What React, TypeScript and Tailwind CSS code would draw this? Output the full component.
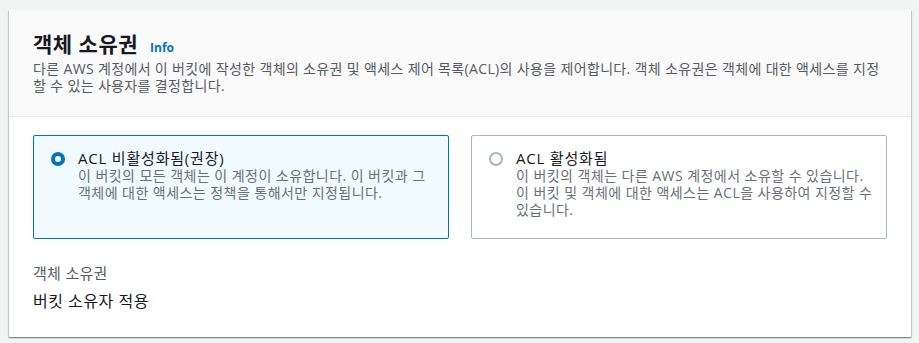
import React from "react"

const font = { fontFamily: '"Open Sans", "Noto Sans CJK KR", sans-serif' }

type Option = {
  id: string
  title: string
  desc: string
  selected: boolean
}

const options: Option[] = [
  {
    id: "disabled",
    title: "ACL 비활성화됨(권장)",
    desc: "이 버킷의 모든 객체는 이 계정이 소유합니다. 이 버킷과 그 객체에 대한 액세스는 정책을 통해서만 지정됩니다.",
    selected: true,
  },
  {
    id: "enabled",
    title: "ACL 활성화됨",
    desc: "이 버킷의 객체는 다른 AWS 계정에서 소유할 수 있습니다. 이 버킷 및 객체에 대한 액세스는 ACL을 사용하여 지정할 수 있습니다.",
    selected: false,
  },
]

function Radio({ checked }: { checked: boolean }) {
  if (checked) {
    return (
      <span className="mt-[3px] w-[14px] h-[14px] rounded-full bg-[#0073bb] flex items-center justify-center shrink-0">
        <span className="w-[6px] h-[6px] rounded-full bg-white" />
      </span>
    )
  }
  return <span className="block mt-[3px] w-[14px] h-[14px] rounded-full border-2 border-[#aab7b8] bg-white shrink-0" />
}

export default function App() {
  return (
    <div className="min-h-screen bg-[#f2f3f3] pt-[10px] pl-[9px]" style={font}>
      <div className="w-[902px] bg-white shadow-[0_1px_1px_0_rgba(0,28,36,0.3),1px_1px_1px_0_rgba(0,28,36,0.15),-1px_1px_1px_0_rgba(0,28,36,0.15)]">
        {/* Header */}
        <div className="bg-[#fafafa] border-b border-[#eaeded] px-6 pt-[23px] pb-[22px]">
          <div className="flex items-baseline gap-[12px]">
            <h2 className="text-[21px] leading-[22px] font-bold tracking-[0.5px] text-[#16191f]">객체 소유권</h2>
            <span className="text-[12px] font-bold text-[#0073bb]">Info</span>
          </div>
          <p className="mt-[3px] text-[14px] leading-[17px] tracking-[0.35px] text-[#545b64]">
            다른 AWS 계정에서 이 버킷에 작성한 객체의 소유권 및 액세스 제어 목록(ACL)의 사용을 제어합니다. 객체 소유권은 객체에 대한 액세스를 지정할 수 있는 사용자를 결정합니다.
          </p>
        </div>

        {/* Body */}
        <div className="px-6 pt-[18px] pb-[26px]">
          <div className="grid grid-cols-2 gap-[22px] break-keep">
            {options.map((o) => (
              <div
                key={o.id}
                className={
                  o.selected
                    ? "flex gap-[13px] border border-[#0073bb] bg-[#f1faff] rounded-[2px] pl-[17px] pr-[12px] pt-[13px] pb-[20px]"
                    : "flex gap-[13px] border border-[#aab7b8] bg-white rounded-[2px] pl-[17px] pr-[12px] pt-[13px] pb-[20px]"
                }
              >
                <Radio checked={o.selected} />
                <div className="text-[14px] leading-[17px] tracking-[0.45px]">
                  <div className="text-[#16191f] text-[15px] leading-[18px] tracking-[0.8px]">{o.title}</div>
                  <div className="text-[#687078]">{o.desc}</div>
                </div>
              </div>
            ))}
          </div>

          <div className="mt-[24px] text-[15px] leading-[20px] tracking-[0.3px] text-[#545b64]">객체 소유권</div>
          <div className="mt-[8px] text-[16px] leading-[20px] tracking-[0.5px] text-[#16191f]">버킷 소유자 적용</div>
        </div>
      </div>
    </div>
  )
}
